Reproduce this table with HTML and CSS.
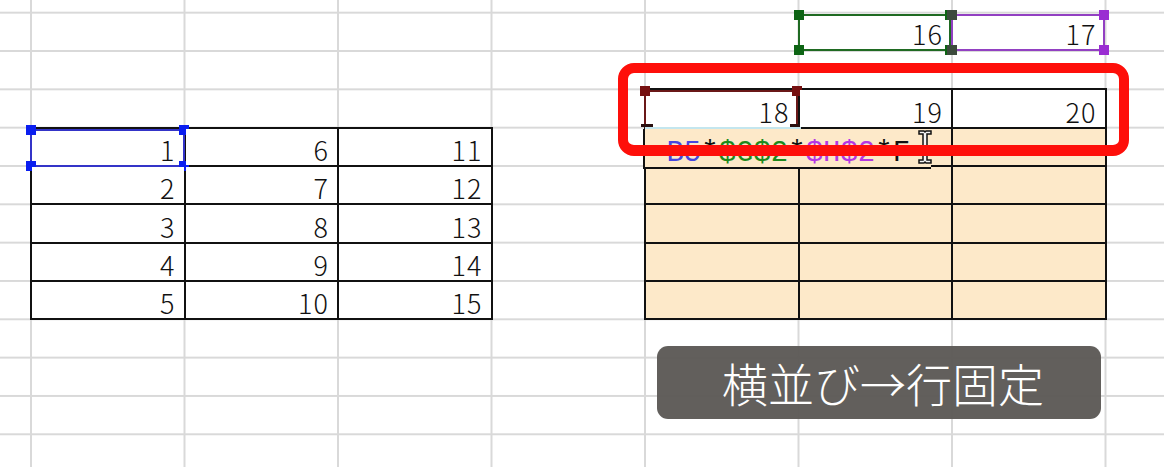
FILE: index.html
```html
<!DOCTYPE html>
<html lang="ja">
<head>
<meta charset="utf-8">
<title>横並び→行固定</title>
<link rel="stylesheet" href="styles.css">
</head>
<body>
<div class="sheet">
  <div class="cell c16"><span class="val">16</span><span class="range green"><i class="h tl"></i><i class="h tr"></i><i class="h bl"></i><i class="h br"></i></span></div>
  <div class="cell c17"><span class="val">17</span><span class="range purple"><i class="h tl"></i><i class="h tr"></i><i class="h bl"></i><i class="h br"></i></span></div>

  <div class="tbl left-tbl">
    <div class="cell sel"><span class="val">1</span><span class="range blue"><i class="h tl"></i><i class="h tr"></i><i class="h bl"></i><i class="h br"></i></span></div>
    <div class="cell"><span class="val">6</span></div>
    <div class="cell"><span class="val">11</span></div>
    <div class="cell"><span class="val">2</span></div>
    <div class="cell"><span class="val">7</span></div>
    <div class="cell"><span class="val">12</span></div>
    <div class="cell"><span class="val">3</span></div>
    <div class="cell"><span class="val">8</span></div>
    <div class="cell"><span class="val">13</span></div>
    <div class="cell"><span class="val">4</span></div>
    <div class="cell"><span class="val">9</span></div>
    <div class="cell"><span class="val">14</span></div>
    <div class="cell"><span class="val">5</span></div>
    <div class="cell"><span class="val">10</span></div>
    <div class="cell"><span class="val">15</span></div>
  </div>

  <div class="tbl right-tbl">
    <div class="cell"><span class="val">18</span><span class="range darkred"><i class="h tl"></i><i class="h tr"></i><i class="h bl"></i><i class="h br"></i></span></div>
    <div class="cell"><span class="val">19</span></div>
    <div class="cell"><span class="val">20</span></div>
    <div class="cell fill"></div><div class="cell fill"></div><div class="cell fill"></div>
    <div class="cell fill"></div><div class="cell fill"></div><div class="cell fill"></div>
    <div class="cell fill"></div><div class="cell fill"></div><div class="cell fill"></div>
    <div class="cell fill"></div><div class="cell fill"></div><div class="cell fill"></div>
    <div class="cell fill"></div><div class="cell fill"></div><div class="cell fill"></div>
  </div>

  <div class="editor">
    <span class="formula"><span class="k">=</span><span class="ref-b">B5</span><span class="k">*</span><span class="ref-g">$G$2</span><span class="k">*</span><span class="ref-p">$H$2</span><span class="k">*F</span></span>
    <svg class="ibeam" width="14" height="34" viewBox="0 0 14 34"><path d="M1 1h5l1 1 1-1h5v3h-4v26h4v3H8l-1-1-1 1H1v-3h4V4H1z" fill="#f4f4f4" stroke="#111" stroke-width="1.5"/></svg>
  </div>

  <div class="focus-frame"></div>
  <div class="caption">横並び→行固定</div>
</div>
</body>
</html>
```
FILE: styles.css
```css
html, body {
  margin: 0;
  padding: 0;
  background: #ffffff;
}

.sheet {
  position: relative;
  width: 1164px;
  height: 467px;
  overflow: hidden;
  display: grid;
  grid-template-columns: 30px repeat(7, 153.5px) 1fr;
  grid-template-rows: 11.7px repeat(12, 38.333px);
  background-color: #ffffff;
  background-image:
    linear-gradient(to right, #d9d9d9 2px, transparent 2px),
    linear-gradient(to bottom, #d9d9d9 2px, transparent 2px);
  background-size: 153.5px 38.333px;
  background-position: 30px 11.7px;
  font-family: "Noto Sans CJK JP", sans-serif;
  color: #111;
}

.cell {
  position: relative;
  display: flex;
  align-items: flex-end;
  justify-content: flex-end;
  padding: 0 8px 2px 0;
  box-sizing: border-box;
  background: #ffffff;
  min-width: 0;
  min-height: 0;
}

.val {
  font-size: 27px;
  line-height: 27px;
  font-weight: 300;
  letter-spacing: 1px;
}

.c16 {
  grid-column: 7;
  grid-row: 2;
  background: transparent;
  padding: 0 8px 3px 0;
}

.c17 {
  grid-column: 8;
  grid-row: 2;
  background: transparent;
  padding: 0 8px 3px 0;
}

.tbl {
  display: grid;
  grid-template-columns: repeat(3, 1fr);
  gap: 2px;
  padding: 2px;
  background: #111;
  margin: 0 -2px -2px 0;
}

.left-tbl {
  grid-column: 2 / span 3;
  grid-row: 5 / span 5;
  grid-template-rows: repeat(5, 1fr);
}

.right-tbl {
  grid-column: 6 / span 3;
  grid-row: 4 / span 6;
  grid-template-rows: repeat(6, 1fr);
}

.cell.fill {
  background: #fde9c9;
}

/* range selection boxes */
.range {
  position: absolute;
  border: 2px solid;
  pointer-events: none;
}

.range .h {
  position: absolute;
  width: 10px;
  height: 10px;
}

.range .tl { left: -6px; top: -6px; }
.range .tr { right: -6px; top: -6px; }
.range .bl { left: -6px; bottom: -6px; }
.range .br { right: -6px; bottom: -6px; }

.range.green {
  inset: 2px 0 -1px 0;
  border-color: #1f6a22;
}
.range.green .h { background: #0d6414; }

.range.purple {
  inset: 2px 0 -1px 0;
  border-color: #9240c2;
}
.range.purple .h { background: #9a2dd2; }
.range.purple .tl, .range.purple .bl { background: #3c4a3c; }

.range.blue {
  inset: 0 -1px -2px -2px;
  border-color: #3434c8;
}
.range.blue .h { background: #0a1ef0; }

.range.darkred {
  inset: 0 0 -1px -2px;
  border-color: #6a1818;
  border-bottom-color: transparent;
}
.range.darkred .h { background: #761010; }
.range.darkred .bl, .range.darkred .br {
  background: #2a1010;
  height: 3px;
  width: 12px;
  bottom: -1px;
}
.range.darkred .bl { left: -5px; }
.range.darkred .br { right: -6px; }

/* in-cell formula editor */
.editor {
  position: absolute;
  left: 643px;
  top: 128.5px;
  width: 288px;
  height: 40.5px;
  box-sizing: border-box;
  border-left: 2px solid #111;
  border-bottom: 2px solid #111;
  background: #fde9c9;
  padding: 13px 0 0 4px;
  z-index: 2;
}

.editor::before {
  content: "";
  position: absolute;
  left: 0;
  top: -2px;
  width: 156px;
  height: 2px;
  background: #c4e6ee;
}

.formula {
  display: block;
  font-family: "Liberation Mono", monospace;
  font-size: 29px;
  line-height: 24px;
  white-space: nowrap;
  letter-spacing: 0;
}

.formula .k { color: #111; }
.formula .ref-b { color: #4646e0; }
.formula .ref-g { color: #1c8a1c; }
.formula .ref-p { color: #b437e4; }

.ibeam {
  position: absolute;
  left: 273px;
  top: 1px;
}

/* red highlight frame */
.focus-frame {
  position: absolute;
  left: 618px;
  top: 63px;
  width: 511px;
  height: 93px;
  box-sizing: border-box;
  border: 10px solid #fe0f0a;
  border-bottom-width: 11px;
  border-radius: 16px;
  z-index: 3;
}

/* caption */
.caption {
  position: absolute;
  left: 657px;
  top: 346px;
  width: 444px;
  height: 73px;
  box-sizing: border-box;
  border-radius: 11px;
  background: rgba(92, 88, 85, 0.96);
  color: #ffffff;
  font-family: "Noto Sans CJK JP", sans-serif;
  font-weight: 300;
  font-size: 46px;
  line-height: 73px;
  text-align: center;
  padding-left: 8px;
  z-index: 3;
}
```
